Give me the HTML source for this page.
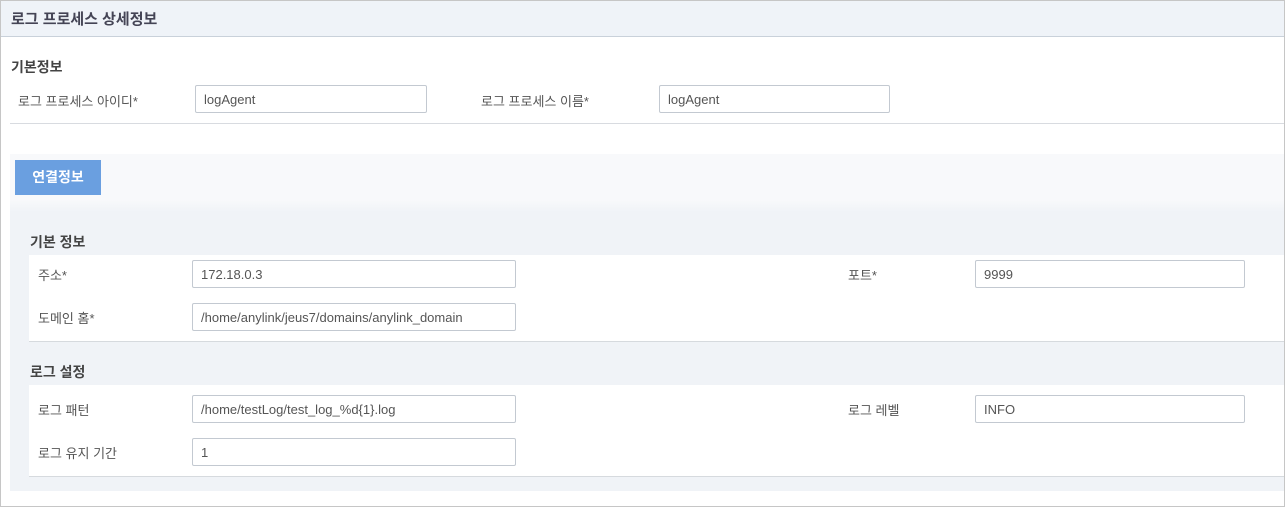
<!DOCTYPE html><html><head><meta charset="utf-8"><style>
*{box-sizing:border-box;margin:0;padding:0}
body{width:1285px;height:508px;background:#fff;font-family:"Liberation Sans","Noto Sans CJK KR",sans-serif;font-size:12px;color:#444;position:relative;overflow:hidden}
.a{position:absolute}
.inp{position:absolute;border:1px solid #c3c9d1;border-radius:2px;background:#fff;height:28px;padding-left:8px;line-height:27px;font-size:13px;color:#555}
.lbl{position:absolute;font-size:13px;color:#555}
.h{position:absolute;font-size:14px;font-weight:bold;color:#444}
</style></head><body>
<div class="a" style="left:0;top:0;width:1285px;height:507px;border:1px solid #c6c6c6"></div>
<div class="a" style="left:1px;top:1px;width:1283px;height:36px;background:#eff3f8;border-bottom:1px solid #c9d1da"></div>
<div class="a" style="left:11px;top:8px;font-size:15px;color:#445;font-weight:bold">로그 프로세스 상세정보</div>
<div class="h" style="left:11px;top:57px">기본정보</div>
<div class="lbl" style="left:18px;top:91px">로그 프로세스 아이디*</div>
<div class="inp" style="left:195px;top:85px;width:232px">logAgent</div>
<div class="lbl" style="left:481px;top:91px">로그 프로세스 이름*</div>
<div class="inp" style="left:659px;top:85px;width:231px">logAgent</div>
<div class="a" style="left:10px;top:123px;width:1274px;height:1px;background:#d8dbe0"></div>
<div class="a" style="left:10px;top:154px;width:1274px;height:50px;background:#f8f9fb"></div>
<div class="a" style="left:15px;top:160px;width:86px;height:35px;background:#6a9fe0;color:#fff;font-weight:bold;font-size:14px;text-align:center;line-height:35px">연결정보</div>
<div class="a" style="left:10px;top:200px;width:1274px;height:291px;background:linear-gradient(#f8f9fb,#f0f3f7 12px)"></div>
<div class="h" style="left:30px;top:232px">기본 정보</div>
<div class="a" style="left:29px;top:255px;width:1255px;height:87px;background:#fff;border-bottom:1px solid #d6dade"></div>
<div class="lbl" style="left:38px;top:265px">주소*</div>
<div class="inp" style="left:192px;top:260px;width:324px">172.18.0.3</div>
<div class="lbl" style="left:848px;top:265px">포트*</div>
<div class="inp" style="left:975px;top:260px;width:270px">9999</div>
<div class="lbl" style="left:38px;top:308px">도메인 홈*</div>
<div class="inp" style="left:192px;top:303px;width:324px">/home/anylink/jeus7/domains/anylink_domain</div>
<div class="h" style="left:30px;top:362px">로그 설정</div>
<div class="a" style="left:29px;top:385px;width:1255px;height:92px;background:#fff;border-bottom:1px solid #d6dade"></div>
<div class="lbl" style="left:38px;top:400px">로그 패턴</div>
<div class="inp" style="left:192px;top:395px;width:324px">/home/testLog/test_log_%d{1}.log</div>
<div class="lbl" style="left:848px;top:400px">로그 레벨</div>
<div class="inp" style="left:975px;top:395px;width:270px">INFO</div>
<div class="lbl" style="left:38px;top:443px">로그 유지 기간</div>
<div class="inp" style="left:192px;top:438px;width:324px">1</div>
</body></html>
